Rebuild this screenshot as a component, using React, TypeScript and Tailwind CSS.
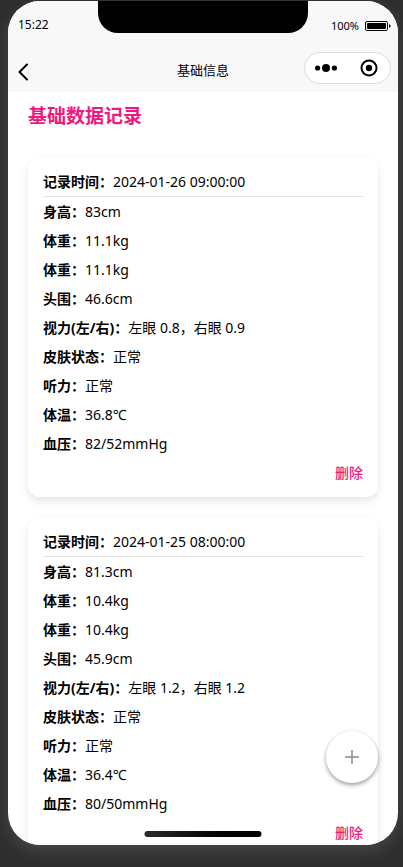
import { useState } from 'react'

interface HealthRecord {
  id: number
  time: string
  items: [string, string][]
}

const initialRecords: HealthRecord[] = [
  {
    id: 1,
    time: '2024-01-26 09:00:00',
    items: [
      ['身高', '83cm'],
      ['体重', '11.1kg'],
      ['体重', '11.1kg'],
      ['头围', '46.6cm'],
      ['视力(左/右)', '左眼 0.8，右眼 0.9'],
      ['皮肤状态', '正常'],
      ['听力', '正常'],
      ['体温', '36.8℃'],
      ['血压', '82/52mmHg'],
    ],
  },
  {
    id: 2,
    time: '2024-01-25 08:00:00',
    items: [
      ['身高', '81.3cm'],
      ['体重', '10.4kg'],
      ['体重', '10.4kg'],
      ['头围', '45.9cm'],
      ['视力(左/右)', '左眼 1.2，右眼 1.2'],
      ['皮肤状态', '正常'],
      ['听力', '正常'],
      ['体温', '36.4℃'],
      ['血压', '80/50mmHg'],
    ],
  },
]

function StatusBar() {
  return (
    <div className="grid h-12 grid-cols-[1fr_auto_1fr] items-center px-[7px]">
      <span className="pl-[3px] text-xs">15:22</span>
      {/* 刘海 */}
      <div className="h-8 w-[210px] self-start rounded-b-[20px] bg-black" />
      <div className="flex items-center justify-end gap-1.5 pt-0.5">
        <span className="text-[11px]">100%</span>
        <svg width="26" height="10" viewBox="0 0 26 10" fill="none" aria-hidden="true">
          <rect x="0.5" y="0.5" width="22" height="9" rx="1.5" stroke="#000" />
          <rect x="2" y="2" width="19" height="6" rx="1" fill="#000" />
          <path d="M24 3.2c1 .3 1.6 1 1.6 1.8S25 6.500 24 6.800z" fill="#000" />
        </svg>
      </div>
    </div>
  )
}

function NavBar() {
  return (
    <div className="grid h-[43px] grid-cols-[1fr_auto_1fr] items-center px-[7px]">
      <button type="button" aria-label="返回" className="w-fit pt-0.5 pl-[3px]">
        <svg width="10" height="18" viewBox="0 0 10 18" fill="none" aria-hidden="true">
          <path d="M9 1.500 1.500 9 9 16.500" stroke="#000" strokeWidth="2" strokeLinecap="round" strokeLinejoin="round" />
        </svg>
      </button>
      <h1 className="text-[13px]">基础信息</h1>
      <div className="mb-1.5 flex h-8 w-[87px] items-center justify-between justify-self-end rounded-full border border-[#dcdcdc] bg-white pr-3 pl-2.5">
        <button type="button" aria-label="更多">
          <svg width="22" height="8" viewBox="0 0 22 8" aria-hidden="true">
            <circle cx="2.600" cy="4" r="2.600" />
            <circle cx="11" cy="4" r="4" />
            <circle cx="19.400" cy="4" r="2.600" />
          </svg>
        </button>
        <button type="button" aria-label="关闭">
          <svg width="18" height="18" viewBox="0 0 18 18" aria-hidden="true">
            <circle cx="9" cy="9" r="7.500" fill="none" stroke="#000" strokeWidth="2" />
            <circle cx="9" cy="9" r="3.200" />
          </svg>
        </button>
      </div>
    </div>
  )
}

function RecordCard({ record, onDelete }: { record: HealthRecord; onDelete: () => void }) {
  return (
    <li className="rounded-xl bg-white px-[15px] py-2.5 text-sm leading-[29px] shadow-[0_4px_8px_rgba(0,0,0,0.1)]">
      <p className="border-b border-[#e5e5e5]">
        <strong>记录时间：</strong>
        {record.time}
      </p>
      {record.items.map(([label, value], index) => (
        <p key={index}>
          <strong>{label}：</strong>
          {value}
        </p>
      ))}
      <div className="flex justify-end">
        <button type="button" onClick={onDelete} className="font-medium text-[#f01880]">
          删除
        </button>
      </div>
    </li>
  )
}

export default function App() {
  const [records, setRecords] = useState(initialRecords)

  const handleDelete = (id: number) => {
    setRecords(prev => prev.filter(record => record.id !== id))
  }

  return (
    <div className="h-screen overflow-hidden bg-[#2e2e2e] pt-px pr-[5px] pb-[22px] pl-2 font-['Noto_Sans','Noto_Sans_CJK_SC',sans-serif] text-black">
      <div className="relative flex h-full flex-col overflow-hidden rounded-[32px] bg-white shadow-[0_6px_16px_rgba(255,255,255,0.12)]">
        <header className="shrink-0 bg-[#f8f8f8]">
          <StatusBar />
          <NavBar />
        </header>

        <main className="min-h-0 flex-1 overflow-y-auto px-5 pt-[11px] pb-5 [scrollbar-width:none]">
          <h2 className="text-[19px] leading-[26px] font-bold text-[#f01880]">基础数据记录</h2>
          <ul className="mt-7 space-y-5">
            {records.map(record => (
              <RecordCard key={record.id} record={record} onDelete={() => handleDelete(record.id)} />
            ))}
          </ul>
        </main>

        {/* 新增按钮 */}
        <button
          type="button"
          aria-label="新增记录"
          className="absolute right-5 bottom-[62px] flex size-[52px] items-center justify-center rounded-full bg-white shadow-[0_2px_4px_rgba(0,0,0,0.4)]"
        >
          <svg width="14" height="14" viewBox="0 0 14 14" aria-hidden="true">
            <path d="M7 0v14M0 7h14" stroke="#8a8a8a" strokeWidth="1.500" />
          </svg>
        </button>

        <div className="absolute bottom-2 left-1/2 h-1.5 w-[117px] -translate-x-1/2 rounded-full bg-gradient-to-r from-[#2c2c2c] to-black" />
      </div>
    </div>
  )
}
